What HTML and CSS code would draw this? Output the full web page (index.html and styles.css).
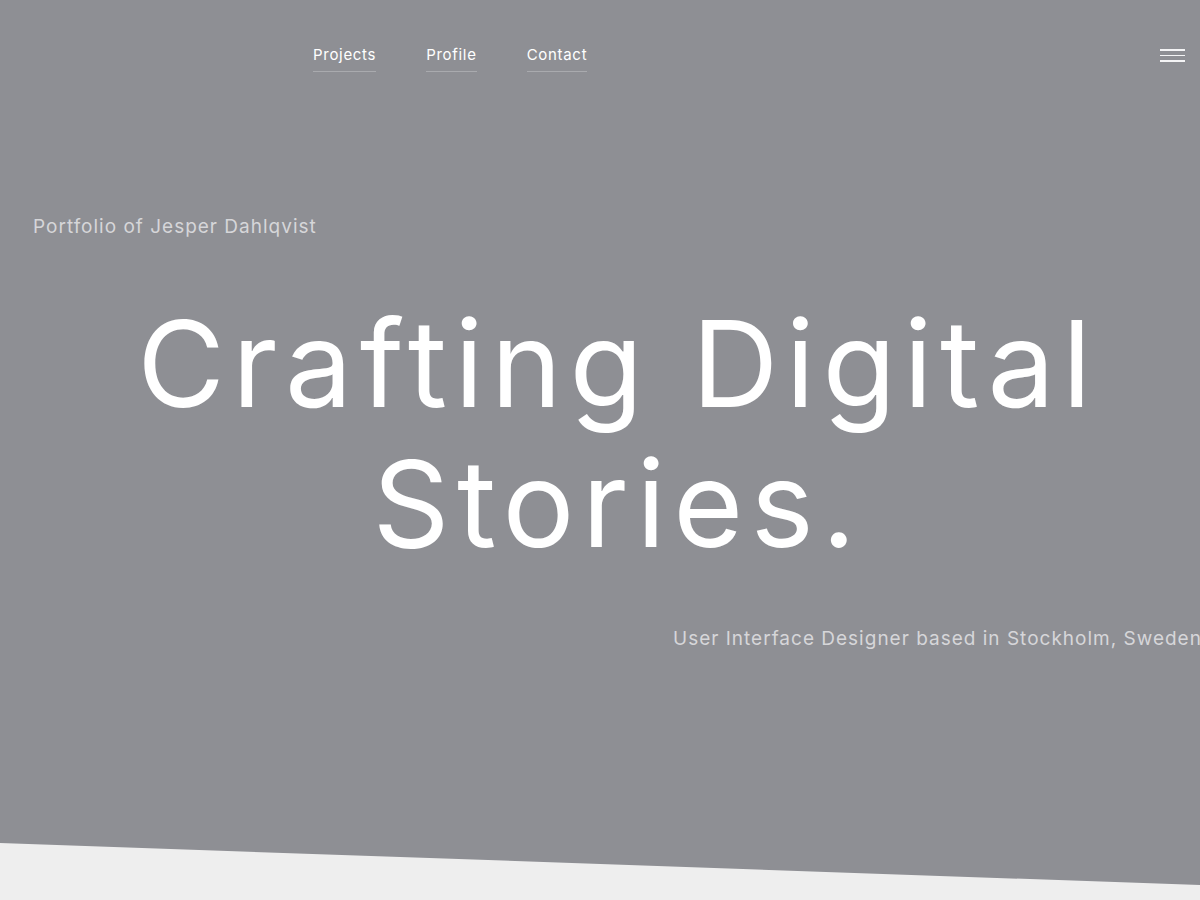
FILE: index.html
```html
<!DOCTYPE html>
<html lang="en">
<head>
<meta charset="utf-8">
<title>Jesper Dahlqvist</title>
<link rel="stylesheet" href="styles.css">
</head>
<body>
<section class="hero">
  <header class="header">
    <nav class="nav">
      <a class="nav-link" href="#">Projects</a>
      <a class="nav-link" href="#">Profile</a>
      <a class="nav-link" href="#">Contact</a>
    </nav>
    <button class="menu" aria-label="Menu">
      <span></span><span></span><span></span>
    </button>
  </header>
  <p class="intro">Portfolio of Jesper Dahlqvist</p>
  <h1 class="title">Crafting Digital<br>Stories.</h1>
  <p class="role">User Interface Designer based in Stockholm, Sweden</p>
</section>
</body>
</html>
```
FILE: styles.css
```css
html, body {
  margin: 0;
  padding: 0;
}
body {
  background: #eeeeee;
  font-family: Inter, "Noto Sans", sans-serif;
  width: 1200px;
  height: 900px;
  overflow: hidden;
}
.hero {
  background: #8e8f94;
  height: 886px;
  clip-path: polygon(0 0, 100% 0, 100% 885px, 0 843px);
  overflow: hidden;
  color: #fff;
}
.header {
  display: flex;
  justify-content: space-between;
  align-items: flex-start;
  padding: 45px 15px 0 313px;
}
.nav {
  display: flex;
  gap: 50px;
}
.nav-link {
  color: #fff;
  text-decoration: none;
  font-size: 15px;
  letter-spacing: 0.7px;
  padding-bottom: 6px;
  border-bottom: 1px solid #a9aaae;
  line-height: 20px;
}
.menu {
  background: none;
  border: 0;
  padding: 0;
  margin-top: 4px;
  width: 25px;
  display: flex;
  flex-direction: column;
  gap: 4px;
}
.menu span {
  display: block;
  height: 1.5px;
  background: #f4f4f5;
  width: 25px;
}
.intro {
  margin: 143px 0 0 33px;
  font-size: 19px;
  letter-spacing: 1px;
  color: #d6d6d9;
  line-height: 24px;
}
.title {
  margin: 55px 0 0;
  padding-left: 36px;
  text-align: center;
  font-weight: 400;
  font-size: 120px;
  line-height: 140px;
  letter-spacing: 7.5px;
  color: #ffffff;
}
.role {
  margin: 53px 0 0 673px;
  white-space: nowrap;
  font-size: 19px;
  letter-spacing: 1px;
  color: #d6d6d9;
  line-height: 24px;
}
```
